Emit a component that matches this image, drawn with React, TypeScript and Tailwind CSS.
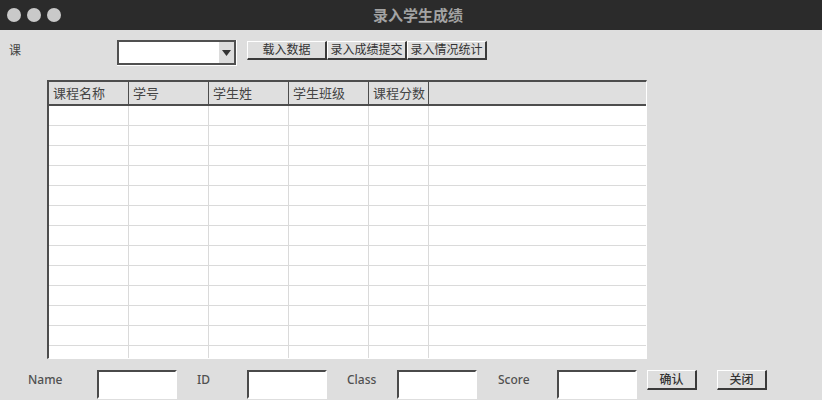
import React from "react";

const cjk = { fontFamily: '"Noto Sans", "Noto Sans CJK SC", sans-serif' };

const columns = [
  { title: "课程名称", w: "w-[80px]" },
  { title: "学号", w: "w-[80px]" },
  { title: "学生姓", w: "w-[80px]" },
  { title: "学生班级", w: "w-[80px]" },
  { title: "课程分数", w: "w-[60px]" },
  { title: "", w: "flex-1" },
];

const rows = Array.from({ length: 13 }, (_, i) => i);

function RaisedButton({ label, className }: { label: string; className: string }) {
  return (
    <button
      className={`border-t border-l border-t-white border-l-white border-b-2 border-r-2 border-b-[#3a3a3a] border-r-[#3a3a3a] bg-[#dedede] text-[12px] text-[#333] leading-none flex items-end justify-center pb-[2px] ${className}`}
    >
      {label}
    </button>
  );
}

function Field({ className }: { className: string }) {
  return (
    <div
      className={`bg-white border-t-2 border-l-2 border-t-[#4a4a4a] border-l-[#4a4a4a] border-b-2 border-r-2 border-b-white border-r-white ${className}`}
    />
  );
}

export default function App() {
  return (
    <div className="w-[822px] h-[400px] bg-[#dedede] overflow-hidden flex flex-col" style={cjk}>
      {/* title bar */}
      <div className="h-[30px] bg-[#2b2b2b] grid grid-cols-[1fr_auto_1fr] items-center shrink-0">
        <div className="flex gap-[6px] pl-[7px]">
          <div className="w-[14px] h-[14px] rounded-full bg-[#c9c9c9]" />
          <div className="w-[14px] h-[14px] rounded-full bg-[#c9c9c9]" />
          <div className="w-[14px] h-[14px] rounded-full bg-[#c9c9c9]" />
        </div>
        <div className="text-[15px] font-bold text-[#a3a3a3] pl-[14px]">录入学生成绩</div>
        <div />
      </div>

      {/* top controls */}
      <div className="flex items-start pt-[10px] h-[50px] shrink-0">
        <div className="ml-[9px] w-[108px] text-[12px] text-[#444] pt-[3px] leading-[16px]">课</div>
        <div className="w-[120px] h-[26px] border-r border-b border-r-white border-b-white">
          <div className="h-full flex border-2 border-[#505050] bg-white">
            <div className="flex-1" />
            <div className="w-[15px] bg-[#dcdcdc] flex items-center justify-center">
              <svg width="9" height="6" viewBox="0 0 9 6">
                <path d="M0 0 H9 L4.5 6 Z" fill="#333" />
              </svg>
            </div>
          </div>
        </div>
        <div className="flex ml-[10px] mt-[1px]">
          <RaisedButton label="载入数据" className="w-[80px] h-[19px]" />
          <RaisedButton label="录入成绩提交" className="w-[80px] h-[19px]" />
          <RaisedButton label="录入情况统计" className="w-[80px] h-[19px]" />
        </div>
      </div>

      {/* table */}
      <div className="ml-[47px] w-[600px] h-[279px] shrink-0 border-t-2 border-l-2 border-t-[#4d4d4d] border-l-[#4d4d4d] border-r border-b border-r-white border-b-white flex flex-col overflow-hidden">
        <div className="h-[24px] flex bg-[#dfdfdf] border-b-2 border-b-[#4d4d4d] shrink-0">
          {columns.map((c, i) => (
            <div
              key={i}
              className={`${c.w} h-full text-[13px] text-[#444] leading-[22px] pl-[4px] ${i < columns.length - 1 ? "border-r border-r-[#4d4d4d]" : ""}`}
            >
              {c.title}
            </div>
          ))}
        </div>
        <div className="flex-1 bg-white overflow-hidden">
          {rows.map((r) => (
            <div key={r} className="h-[20px] flex border-b border-b-[#dadada]">
              {columns.map((c, i) => (
                <div
                  key={i}
                  className={`${c.w} h-full ${i < columns.length - 1 ? "border-r border-r-[#dadada]" : ""}`}
                />
              ))}
            </div>
          ))}
        </div>
      </div>

      {/* bottom form */}
      <div className="flex items-start mt-[11px] text-[12px] text-[#505050] font-medium">
        <div className="ml-[28px] w-[69px] leading-[20px]">Name</div>
        <Field className="w-[80px] h-[29px]" />
        <div className="ml-[20px] w-[50px] leading-[20px]">ID</div>
        <Field className="w-[80px] h-[29px]" />
        <div className="ml-[20px] w-[50px] leading-[20px]">Class</div>
        <Field className="w-[80px] h-[29px]" />
        <div className="ml-[21px] w-[59px] leading-[20px]">Score</div>
        <Field className="w-[80px] h-[29px]" />
        <RaisedButton label="确认" className="ml-[10px] w-[50px] h-[20px]" />
        <RaisedButton label="关闭" className="ml-[20px] w-[50px] h-[20px]" />
      </div>
    </div>
  );
}
